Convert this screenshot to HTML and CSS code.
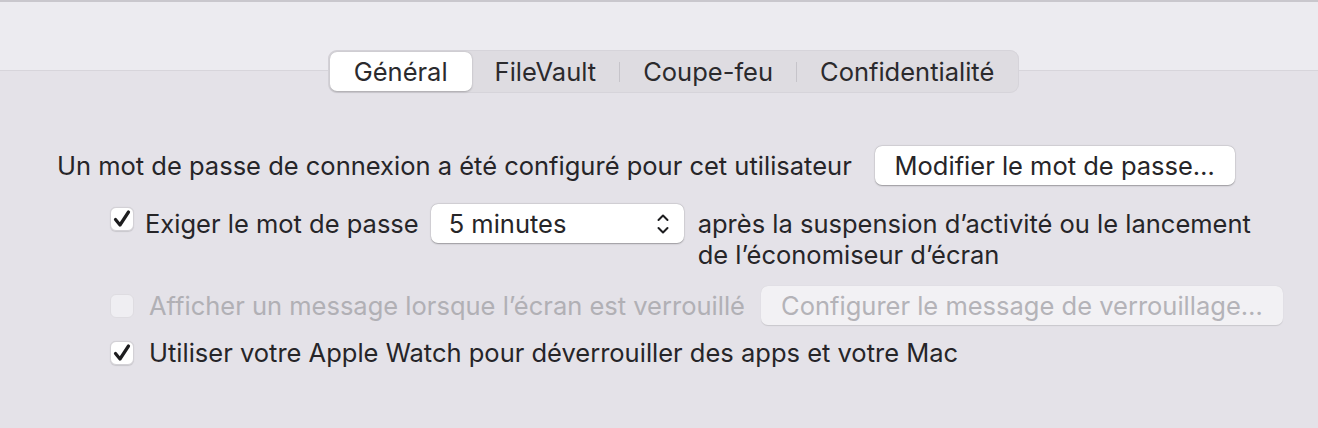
FILE: index.html
```html
<!DOCTYPE html>
<html lang="fr">
<head>
    <meta charset="UTF-8">
    <title>Sécurité et confidentialité</title>
    <link rel="stylesheet" href="styles.css">
</head>
<body>
    <div class="toolbar">
        <div class="tabs">
            <div class="tab active">Général</div>
            <div class="tab">FileVault</div>
            <span class="tab-sep"></span>
            <div class="tab">Coupe-feu</div>
            <span class="tab-sep"></span>
            <div class="tab">Confidentialité</div>
        </div>
    </div>

    <div class="pane">
        <div class="row row-password">
            <span class="label">Un mot de passe de connexion a été configuré pour cet utilisateur</span>
            <button class="btn btn-change">Modifier le mot de passe…</button>
        </div>

        <div class="row row-require">
            <span class="check checked">
                <svg viewBox="0 0 24 24" width="24" height="24"><path d="M5.5 12.5 L10 18 L18.5 5" /></svg>
            </span>
            <span class="label label-require">Exiger le mot de passe</span>
            <div class="select">
                <span>5 minutes</span>
                <svg class="stepper" viewBox="0 0 14 26" width="14" height="26"><path d="M2.5 9 L7 4.5 L11.5 9" /><path d="M2.5 17 L7 21.5 L11.5 17" /></svg>
            </div>
            <span class="label label-after">après la suspension d’activité ou le lancement<br>de l’économiseur d’écran</span>
        </div>

        <div class="row row-message disabled">
            <span class="check"></span>
            <span class="label">Afficher un message lorsque l’écran est verrouillé</span>
            <button class="btn btn-lock" disabled>Configurer le message de verrouillage…</button>
        </div>

        <div class="row row-watch">
            <span class="check checked">
                <svg viewBox="0 0 24 24" width="24" height="24"><path d="M5.5 12.5 L10 18 L18.5 5" /></svg>
            </span>
            <span class="label">Utiliser votre Apple Watch pour déverrouiller des apps et votre Mac</span>
        </div>
    </div>
</body>
</html>
```

FILE: styles.css
```css
body {
    margin: 0;
    padding: 0;
    background-color: #e4e2e8;
    font-family: Inter, 'Noto Sans', sans-serif;
    font-size: 25.5px;
    line-height: 31px;
    color: #262528;
    height: 428px;
    overflow: hidden;
}

/* top bar with the segmented control */
.toolbar {
    height: 20px;
    background-color: #ecebf0;
    border-top: 2px solid #c9c7cd;
    border-bottom: 1px solid #d7d5db;
    padding-top: 48px;
    padding-left: 29px;
    display: flex;
    justify-content: center;
    align-items: flex-start;
}
.tabs {
    display: flex;
    align-items: center;
    flex-shrink: 0;
    height: 43px;
    box-sizing: border-box;
    padding: 2px;
    background-color: #dedce1;
    border-radius: 9px;
    box-shadow: inset 0 0 0 1px #d6d4da;
}
.tab {
    height: 39px;
    line-height: 39px;
    padding: 0 23px;
    white-space: nowrap;
    color: #2b2a2d;
}
.tab.active {
    background-color: #fff;
    border-radius: 7px;
    box-shadow: 0 0.5px 2px rgba(0, 0, 0, 0.25);
    padding: 0 24px;
}
.tab-sep {
    width: 1px;
    height: 20px;
    background-color: #c6c4ca;
}

/* content */
.pane {
    padding-left: 57px;
    padding-top: 75px;
}
.row {
    display: flex;
    align-items: center;
    white-space: nowrap;
}
.row-password {
    gap: 23px;
}
.row-require {
    margin-top: 19px;
    margin-left: 53px;
    align-items: flex-start;
}
.row-message {
    margin-top: 16px;
    margin-left: 53px;
}
.row-watch {
    margin-top: 12px;
    margin-left: 53px;
}

.btn {
    font-family: inherit;
    font-size: 25.5px;
    color: #262528;
    background-color: #fff;
    border: none;
    border-radius: 7px;
    height: 39px;
    padding: 0 10px;
    box-shadow: 0 0.5px 1.5px rgba(0, 0, 0, 0.3), 0 0 0 0.5px rgba(0, 0, 0, 0.06);
    white-space: nowrap;
}
.btn-change {
    width: 360px;
}
.btn-lock {
    width: 522px;
    margin-left: 16px;
    background-color: #f2f1f4;
    color: #b4b3b8;
    box-shadow: 0 0.5px 1px rgba(0, 0, 0, 0.12);
}

.check {
    width: 24px;
    height: 24px;
    box-sizing: border-box;
    border-radius: 6px;
    background-color: #fff;
    border: 1px solid #d3d1d6;
    box-shadow: 0 0.5px 1px rgba(0, 0, 0, 0.12);
    flex-shrink: 0;
    margin-right: 15px;
    display: flex;
    align-items: center;
    justify-content: center;
}
.check svg {
    flex-shrink: 0;
    fill: none;
    stroke: #1d1d1f;
    stroke-width: 3.2;
    stroke-linecap: round;
    stroke-linejoin: round;
}
.row-require .check {
    margin-top: 3px;
    margin-right: 11px;
}
.disabled .check {
    background-color: #efeef2;
    border-color: #dedce1;
    box-shadow: none;
}
.disabled .label {
    color: #b1b0b5;
}

.label-require {
    line-height: 39px;
}
.select {
    margin-left: 12px;
    width: 253px;
    height: 39px;
    flex-shrink: 0;
    box-sizing: border-box;
    background-color: #fff;
    border-radius: 7px;
    box-shadow: 0 0.5px 1.5px rgba(0, 0, 0, 0.3), 0 0 0 0.5px rgba(0, 0, 0, 0.06);
    display: flex;
    align-items: center;
    justify-content: space-between;
    padding: 0 14px 0 18px;
}
.stepper {
    fill: none;
    stroke: #1d1d1f;
    stroke-width: 2;
    stroke-linecap: round;
    stroke-linejoin: round;
}
.label-after {
    margin-left: 14px;
    margin-top: 4px;
}
```
